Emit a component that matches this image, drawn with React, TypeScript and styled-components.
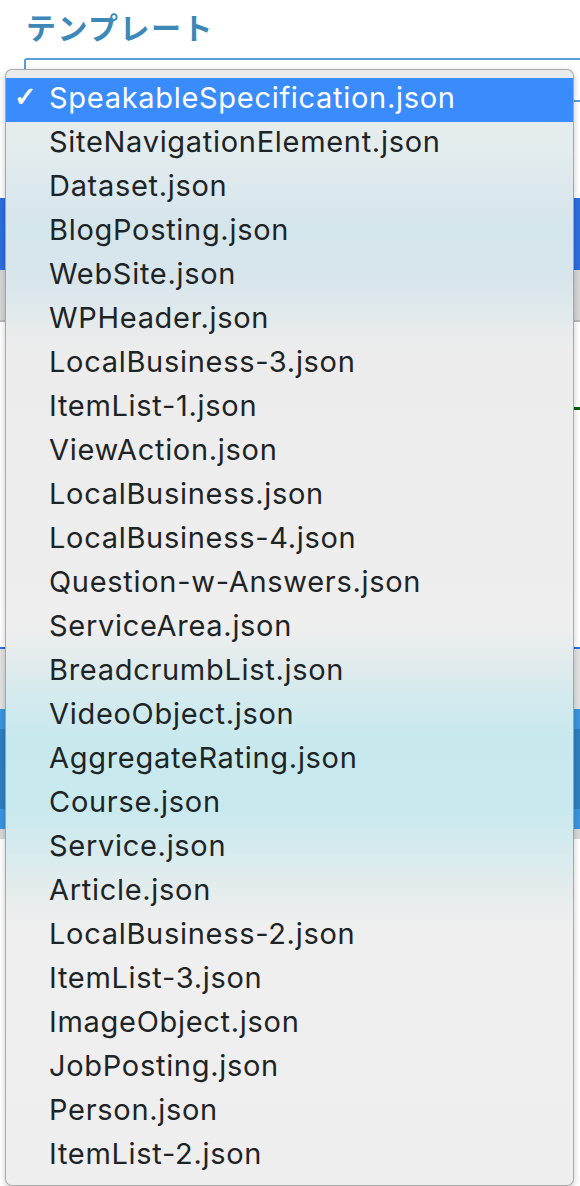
import React from "react";
import styled, { createGlobalStyle } from "styled-components";

const Global = createGlobalStyle`
  html, body { margin: 0; padding: 0; background: #ffffff; }
  body { width: 580px; height: 1186px; overflow: hidden; }
  #root { position: relative; width: 580px; height: 1186px; }
`;

const Page = styled.div`
  display: flex;
  flex-direction: column;
  width: 580px;
  height: 1186px;
  overflow: hidden;
  font-family: "Noto Sans CJK JP", "Noto Sans", sans-serif;
`;

const Heading = styled.h2`
  margin: 0;
  padding: 4px 0 0 26px;
  height: 58px;
  box-sizing: border-box;
  font-size: 30px;
  font-weight: 700;
  line-height: 44px;
  color: #3e88b7;
  letter-spacing: 1.5px;
`;

const SelectBox = styled.div`
  margin-left: 24px;
  margin-right: -20px;
  height: 40px;
  border: 2px solid #5d9cd8;
  border-radius: 3px;
  background: #fff;
`;

const Spacer = styled.div<{ $h: number }>`
  height: ${(p) => p.$h}px;
  flex-shrink: 0;
`;

const Bar = styled.div<{ $h: number; $bg: string }>`
  height: ${(p) => p.$h}px;
  background: ${(p) => p.$bg};
  flex-shrink: 0;
`;

const GreenMark = styled.div`
  height: 3px;
  margin-left: 570px;
  background: #0c5a10;
`;

const BigButton = styled.div`
  height: 120px;
  background: #3a95e0;
  display: flex;
  align-items: center;
  flex-shrink: 0;
`;

const ButtonInner = styled.div`
  height: 80px;
  width: 100%;
  background: #2e7fc2;
`;

const Menu = styled.ul`
  position: absolute;
  left: 5px;
  top: 69px;
  width: 569px;
  height: 1117px;
  box-sizing: border-box;
  margin: 0;
  padding: 8px 0 0;
  list-style: none;
  border: 1px solid rgba(0, 0, 0, 0.28);
  border-radius: 7px;
  box-shadow: 0 2px 6px rgba(0, 0, 0, 0.22);
  overflow: hidden;
  background: linear-gradient(
    180deg,
    #e9ebeb 0%,
    #e3ecee 7%,
    #d5e5ec 14%,
    #d8e6ec 19%,
    #e2eaec 22%,
    #ececec 25%,
    #eeeeee 50%,
    #e2ebed 53%,
    #d2eaee 56.5%,
    #c7e9ee 60%,
    #c8e9ee 66%,
    #d2eaee 69%,
    #e6ecec 74%,
    #efefef 77%,
    #eeeeee 100%
  );
  font-family: "Inter", "Liberation Sans", sans-serif;
`;

const Item = styled.li<{ $selected?: boolean }>`
  position: relative;
  height: 44px;
  box-sizing: border-box;
  display: flex;
  align-items: center;
  padding: 0 0 6px 43px;
  font-size: 29px;
  letter-spacing: 0.7px;
  color: ${(p) => (p.$selected ? "#ffffff" : "#1e2426")};
  background: ${(p) => (p.$selected ? "#3a8cfc" : "transparent")};
  white-space: nowrap;
`;

const Check = styled.span`
  position: absolute;
  left: 8px;
  top: -3px;
  line-height: 44px;
  font-size: 27px;
  font-family: "DejaVu Sans", sans-serif;
  font-weight: bold;
  color: #fff;
  -webkit-text-stroke: 0.8px #fff;
`;

const items = [
  "SpeakableSpecification.json",
  "SiteNavigationElement.json",
  "Dataset.json",
  "BlogPosting.json",
  "WebSite.json",
  "WPHeader.json",
  "LocalBusiness-3.json",
  "ItemList-1.json",
  "ViewAction.json",
  "LocalBusiness.json",
  "LocalBusiness-4.json",
  "Question-w-Answers.json",
  "ServiceArea.json",
  "BreadcrumbList.json",
  "VideoObject.json",
  "AggregateRating.json",
  "Course.json",
  "Service.json",
  "Article.json",
  "LocalBusiness-2.json",
  "ItemList-3.json",
  "ImageObject.json",
  "JobPosting.json",
  "Person.json",
  "ItemList-2.json",
];

export default function App() {
  return (
    <>
      <Global />
      <Page>
        <Heading>テンプレート</Heading>
        <SelectBox />
        <Spacer $h={96} />
        <Bar $h={72} $bg="#2c6de0" />
        <Bar $h={50} $bg="#d6d6d6" />
        <Bar $h={2} $bg="#b8b8b8" />
        <Spacer $h={85} />
        <GreenMark />
        <Spacer $h={237} />
        <Bar $h={2} $bg="#2c6de0" />
        <Bar $h={60} $bg="#e2e2e2" />
        <BigButton>
          <ButtonInner />
        </BigButton>
        <Bar $h={10} $bg="#d8d8d8" />
      </Page>
      <Menu>
        {items.map((name, i) => (
          <Item key={name} $selected={i === 0}>
            {i === 0 && <Check>✓</Check>}
            {name}
          </Item>
        ))}
      </Menu>
    </>
  );
}
